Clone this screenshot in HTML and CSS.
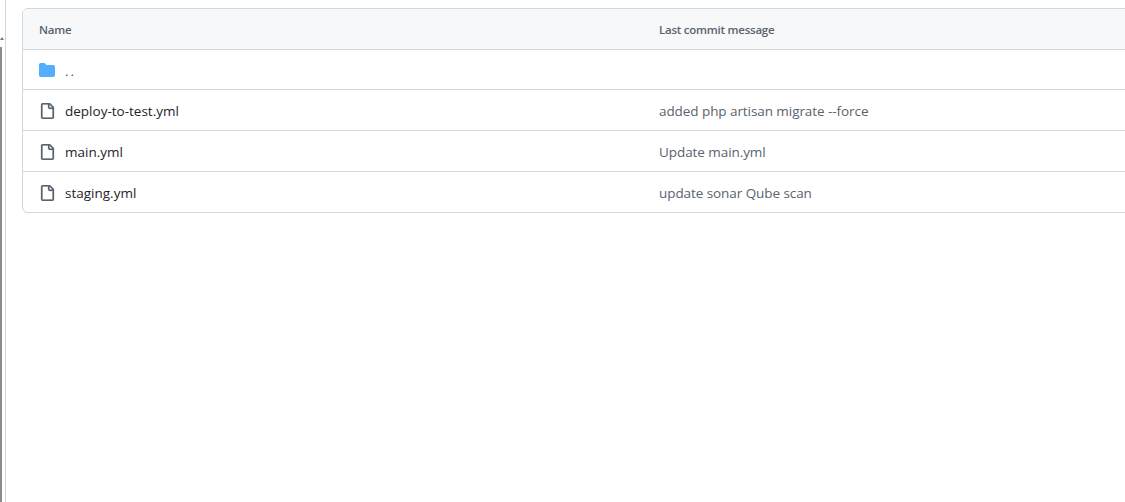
FILE: index.html
```html
<!DOCTYPE html>
<html lang="en">
<head>
<meta charset="utf-8">
<title>Files</title>
<link rel="stylesheet" href="styles.css">
</head>
<body>
<div class="scrollbar"><span class="arrow"></span><span class="thumb"></span></div>
<main class="pane">
  <div class="table">
    <div class="row head"><div class="name">Name</div><div class="msg">Last commit message</div></div>
    <div class="row parent">
      <div class="name">
        <svg class="icon" viewBox="0 0 16 16" aria-hidden="true"><path class="folder" d="M1.75 1A1.75 1.75 0 0 0 0 2.75v10.5C0 14.216.784 15 1.75 15h12.5A1.75 1.75 0 0 0 16 13.25v-8.5A1.75 1.75 0 0 0 14.25 3H7.5a.25.25 0 0 1-.2-.1l-.9-1.2C6.07 1.26 5.55 1 5 1H1.75Z"/></svg>
        <span class="dots">..</span>
      </div>
      <div class="msg"></div>
    </div>
    <div class="row">
      <div class="name">
        <svg class="icon" viewBox="0 0 16 16" aria-hidden="true"><path class="file" d="M2 1.75C2 .784 2.784 0 3.75 0h6.586c.464 0 .909.184 1.237.513l2.914 2.914c.329.328.513.773.513 1.237v9.586A1.75 1.75 0 0 1 13.25 16h-9.5A1.75 1.75 0 0 1 2 14.25Zm1.75-.25a.25.25 0 0 0-.25.25v12.5c0 .138.112.25.25.25h9.5a.25.25 0 0 0 .25-.25V6h-2.75A1.75 1.75 0 0 1 9 4.25V1.5Zm6.75.062V4.25c0 .138.112.25.25.25h2.688l-.011-.013-2.914-2.914-.013-.011Z"/></svg>
        <span class="file-name">deploy-to-test.yml</span>
      </div>
      <div class="msg">added php artisan migrate --force</div>
    </div>
    <div class="row">
      <div class="name">
        <svg class="icon" viewBox="0 0 16 16" aria-hidden="true"><path class="file" d="M2 1.75C2 .784 2.784 0 3.75 0h6.586c.464 0 .909.184 1.237.513l2.914 2.914c.329.328.513.773.513 1.237v9.586A1.75 1.75 0 0 1 13.25 16h-9.5A1.75 1.75 0 0 1 2 14.25Zm1.75-.25a.25.25 0 0 0-.25.25v12.5c0 .138.112.25.25.25h9.5a.25.25 0 0 0 .25-.25V6h-2.75A1.75 1.75 0 0 1 9 4.25V1.5Zm6.75.062V4.25c0 .138.112.25.25.25h2.688l-.011-.013-2.914-2.914-.013-.011Z"/></svg>
        <span class="file-name">main.yml</span>
      </div>
      <div class="msg">Update main.yml</div>
    </div>
    <div class="row">
      <div class="name">
        <svg class="icon" viewBox="0 0 16 16" aria-hidden="true"><path class="file" d="M2 1.75C2 .784 2.784 0 3.75 0h6.586c.464 0 .909.184 1.237.513l2.914 2.914c.329.328.513.773.513 1.237v9.586A1.75 1.75 0 0 1 13.25 16h-9.5A1.75 1.75 0 0 1 2 14.25Zm1.75-.25a.25.25 0 0 0-.25.25v12.5c0 .138.112.25.25.25h9.5a.25.25 0 0 0 .25-.25V6h-2.75A1.75 1.75 0 0 1 9 4.25V1.5Zm6.75.062V4.25c0 .138.112.25.25.25h2.688l-.011-.013-2.914-2.914-.013-.011Z"/></svg>
        <span class="file-name">staging.yml</span>
      </div>
      <div class="msg">update sonar Qube scan</div>
    </div>
  </div>
</main>
</body>
</html>
```
FILE: styles.css
```css
html, body { height: 100%; }
body {
  margin: 0;
  display: flex;
  overflow: hidden;
  background: #fff;
  font-family: "Open Sans", "Noto Sans", sans-serif;
  font-size: 13.5px;
  color: #1f2328;
}
.scrollbar {
  width: 5px;
  flex: none;
  display: flex;
  flex-direction: column;
  align-items: flex-start;
}
.arrow {
  margin-top: 37px;
  width: 0;
  height: 0;
  border-left: 2px solid transparent;
  border-right: 2px solid transparent;
  border-bottom: 3px solid #777;
}
.thumb {
  margin-top: 7px;
  flex: 1;
  width: 2px;
  background: #8c8c8c;
}
.pane {
  flex: 1;
  min-width: 0;
  border-left: 1px solid #d0d7de;
  padding: 8px 0 0 16px;
  overflow: hidden;
}
.table {
  width: 1200px;
  border: 1px solid #d0d7de;
  border-radius: 6px;
  overflow: hidden;
}
.row {
  box-sizing: border-box;
  display: flex;
  align-items: center;
  height: 41px;
  padding-top: 2px;
  border-top: 1px solid #d0d7de;
}
.parent { height: 40px; padding-top: 0; }
.head {
  height: 40px;
  padding-top: 1px;
  border-top: 0;
  background: #f6f8fa;
  font-size: 11.5px;
  font-weight: 600;
  letter-spacing: -0.24px;
  color: #59636e;
}
.name {
  width: 620px;
  flex: none;
  padding-left: 16px;
  display: flex;
  align-items: center;
  gap: 10px;
}
.msg { color: #59636e; }
.row:not(.head) .msg { letter-spacing: -0.07px; }
.icon { width: 16px; height: 16px; flex: none; }
.folder { fill: #54aeff; }
.file { fill: #59636e; stroke: #59636e; stroke-width: 0.25; }
.dots { color: #59636e; letter-spacing: 2px; padding-top: 2px; }
```
